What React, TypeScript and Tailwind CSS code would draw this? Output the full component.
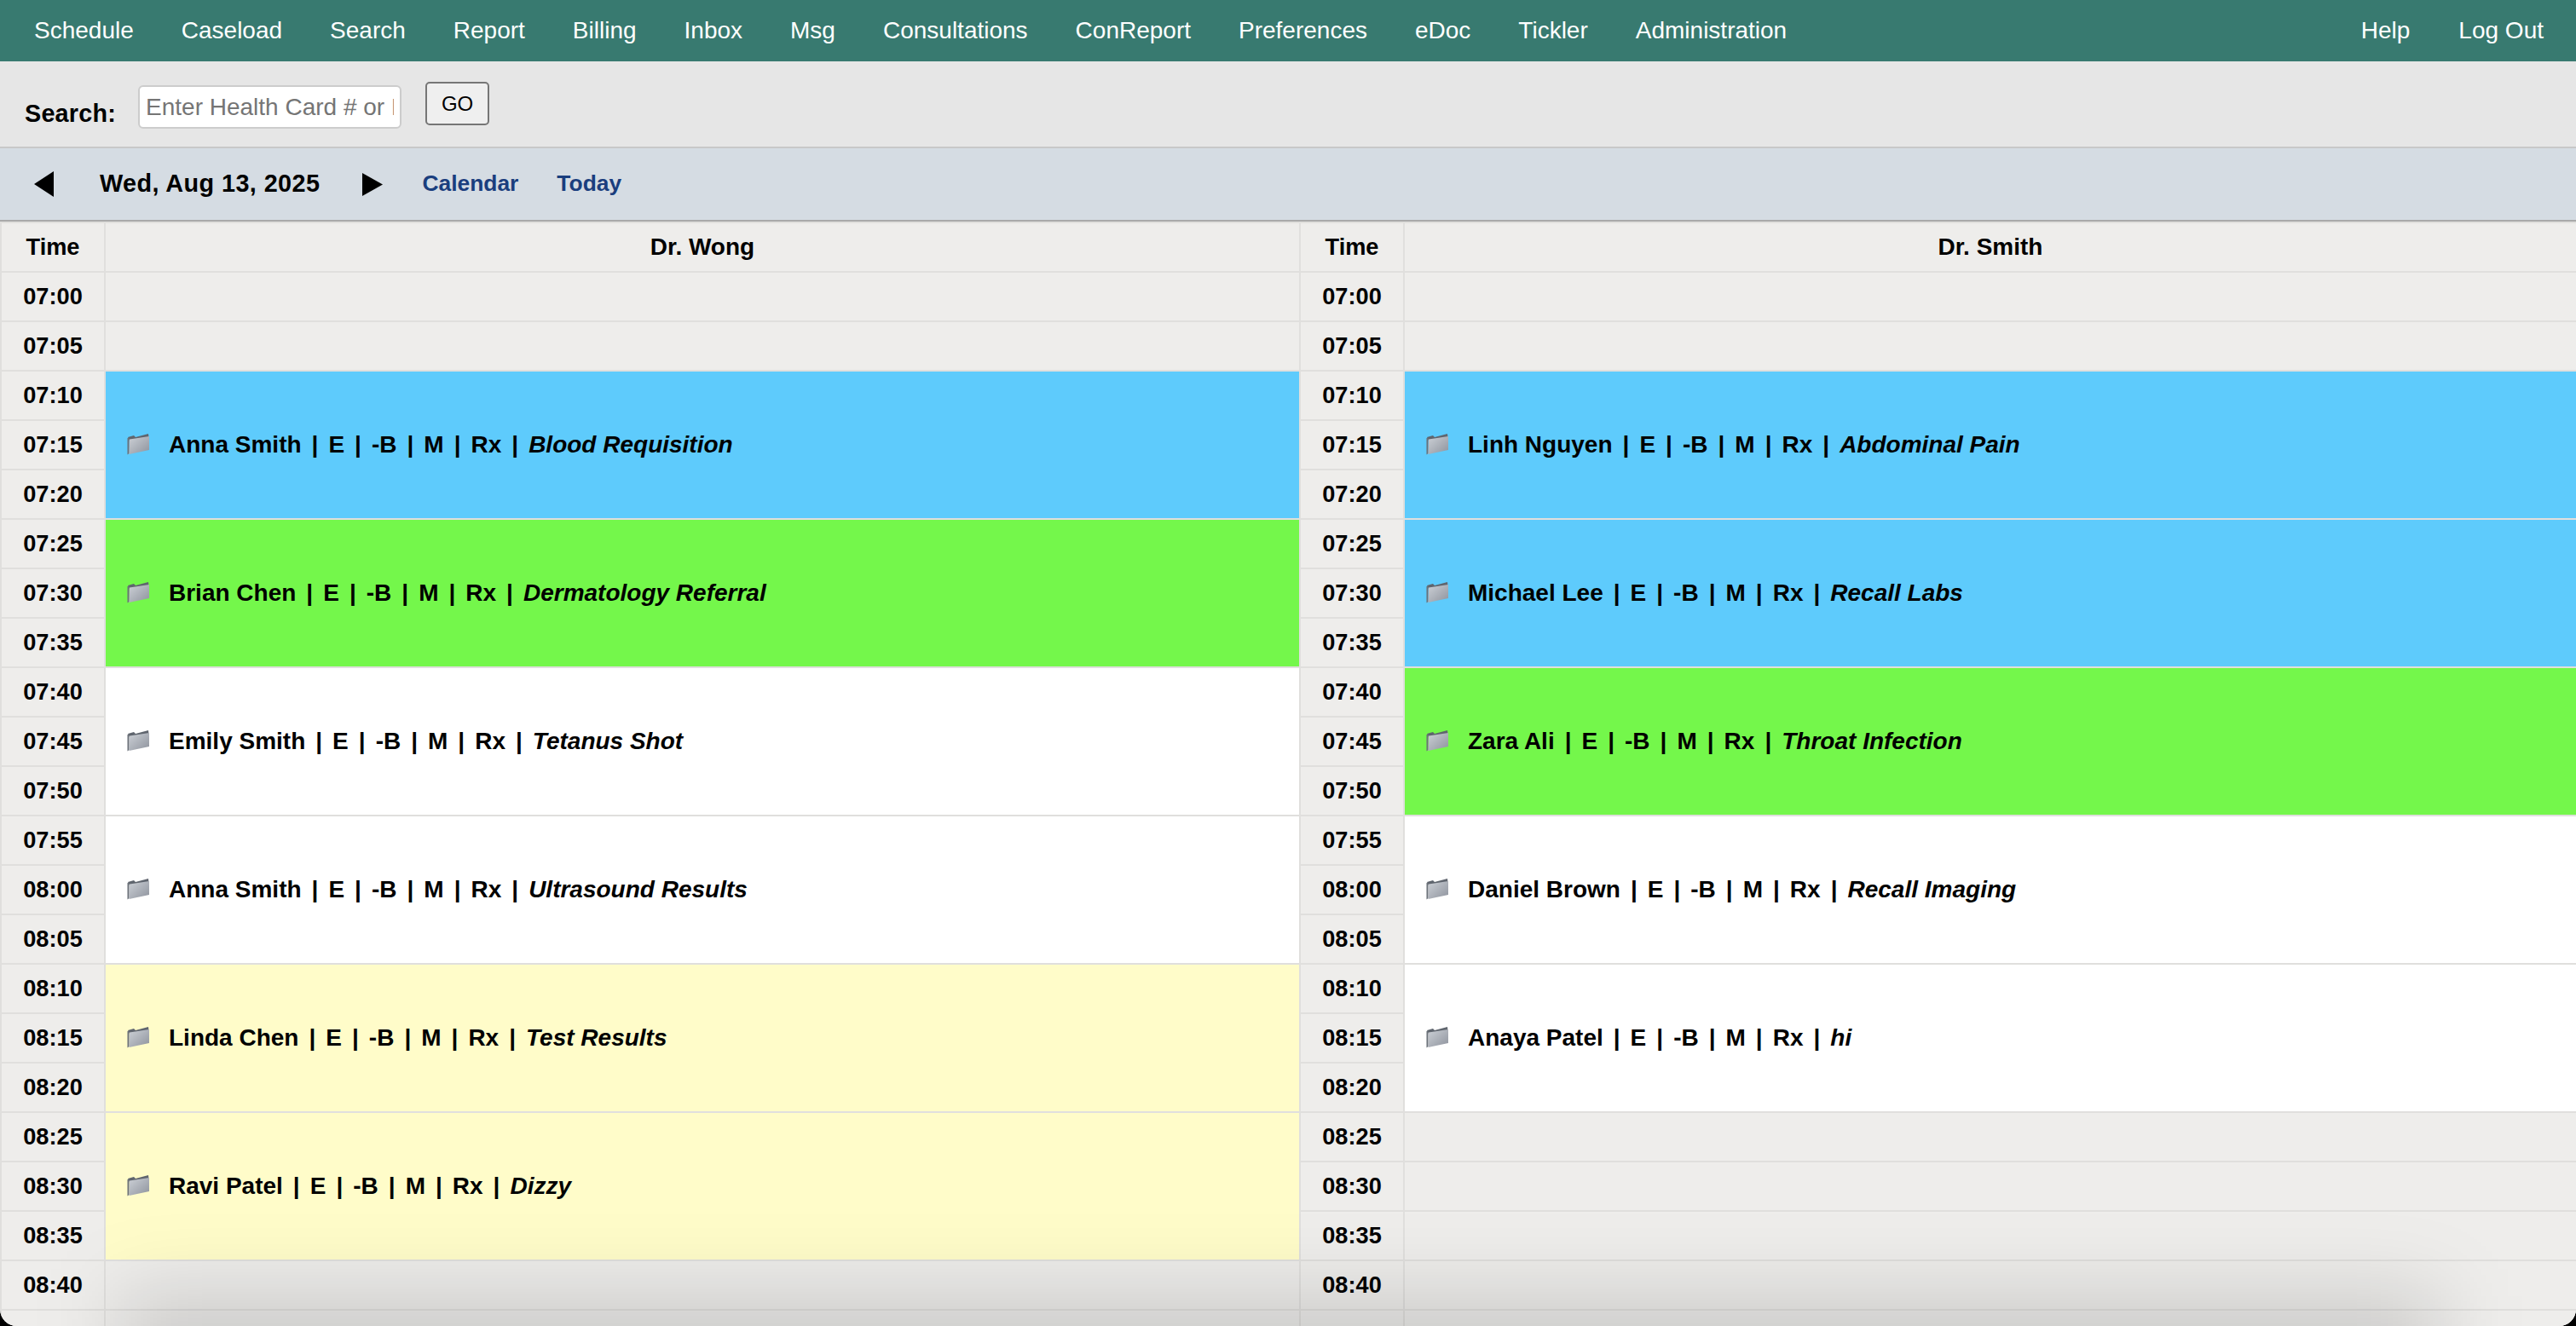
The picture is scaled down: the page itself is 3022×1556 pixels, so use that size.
import React from 'react';

const navLeft = ['Schedule', 'Caseload', 'Search', 'Report', 'Billing', 'Inbox', 'Msg', 'Consultations', 'ConReport', 'Preferences', 'eDoc', 'Tickler', 'Administration'];
const navRight = ['Help', 'Log Out'];

const times = ['07:00', '07:05', '07:10', '07:15', '07:20', '07:25', '07:30', '07:35', '07:40', '07:45', '07:50', '07:55', '08:00', '08:05', '08:10', '08:15', '08:20', '08:25', '08:30', '08:35', '08:40', '08:45'];

type Appt = { start: number; name: string; reason: string; bg: string };

const BLUE = 'bg-[#5ecbfc]';
const GREEN = 'bg-[#74f74b]';
const WHITE = 'bg-white';
const YELLOW = 'bg-[#fffcc9]';

const wong: Appt[] = [
  { start: 2, name: 'Anna Smith', reason: 'Blood Requisition', bg: BLUE },
  { start: 5, name: 'Brian Chen', reason: 'Dermatology Referral', bg: GREEN },
  { start: 8, name: 'Emily Smith', reason: 'Tetanus Shot', bg: WHITE },
  { start: 11, name: 'Anna Smith', reason: 'Ultrasound Results', bg: WHITE },
  { start: 14, name: 'Linda Chen', reason: 'Test Results', bg: YELLOW },
  { start: 17, name: 'Ravi Patel', reason: 'Dizzy', bg: YELLOW },
];

const smith: Appt[] = [
  { start: 2, name: 'Linh Nguyen', reason: 'Abdominal Pain', bg: BLUE },
  { start: 5, name: 'Michael Lee', reason: 'Recall Labs', bg: BLUE },
  { start: 8, name: 'Zara Ali', reason: 'Throat Infection', bg: GREEN },
  { start: 11, name: 'Daniel Brown', reason: 'Recall Imaging', bg: WHITE },
  { start: 14, name: 'Anaya Patel', reason: 'hi', bg: WHITE },
];

function FolderIcon({ id }: { id: string }) {
  return (
    <svg width="27" height="26" viewBox="0 0 27 26" className="shrink-0 -mt-[2px]">
      <defs>
        <linearGradient id={id} x1="0" y1="0" x2="1" y2="1">
          <stop offset="0" stopColor="#ccd0d6" />
          <stop offset="1" stopColor="#8e939d" />
        </linearGradient>
      </defs>
      <path d="M1 5 L8 3 L10 5 L25 1 L25.5 5 L3 9 Z" fill="#5f656e" />
      <path d="M0.5 6 L2.5 6 L2.5 24 L0.5 25.5 Z" fill="#6b7179" />
      <path d="M3 7.5 L26 4 L26 20 L2.5 25 Z" fill={`url(#${id})`} />
    </svg>
  );
}

function Sep() {
  return <span className="mx-[12px]">|</span>;
}

function ApptCell({ appt, col, id }: { appt: Appt; col: string; id: string }) {
  return (
    <div className={`${col} row-span-3 ${appt.bg} flex items-center pl-[25px] gap-[22px] font-bold text-[28px] text-black whitespace-nowrap`}>
      <FolderIcon id={id} />
      <div>
        {appt.name}
        <Sep />E<Sep />-B<Sep />M<Sep />Rx<Sep />
        <i>{appt.reason}</i>
      </div>
    </div>
  );
}

function TimeCell({ time, col }: { time: string; col: string }) {
  return <div className={`${col} bg-[#eeedeb] flex items-center justify-center font-bold text-[27.2px] text-black`}>{time}</div>;
}

function ColumnCell({ appts, index, col, id }: { appts: Appt[]; index: number; col: string; id: string }) {
  const appt = appts.find((a) => a.start === index);
  if (appt) return <ApptCell appt={appt} col={col} id={`${id}-${index}`} />;
  const covered = appts.some((a) => index > a.start && index < a.start + 3);
  if (covered) return null;
  return <div className={`${col} bg-[#eeedeb]`} />;
}

export default function App() {
  return (
    <div className="bg-black h-[1556px] w-[3022px]">
      <div className="relative h-full overflow-hidden rounded-b-[20px] bg-[#eeedeb] font-['Liberation_Sans',Arial,sans-serif]">
        {/* Top nav */}
        <nav className="h-[72px] bg-[#387a70] flex items-center justify-between pl-[40px] pr-[38px] text-white text-[28px]">
          <div className="flex gap-[56px]">
            {navLeft.map((item) => (
              <a key={item}>{item}</a>
            ))}
          </div>
          <div className="flex gap-[57px]">
            {navRight.map((item) => (
              <a key={item}>{item}</a>
            ))}
          </div>
        </nav>

        {/* Search */}
        <div className="h-[102px] bg-[#e6e6e6] border-b-2 border-[#c8c8c8] flex items-start pl-[29px]">
          <label className="mt-[44px] mr-[26px] font-bold text-[28.8px] tracking-[0.2px] leading-[34px] text-black">Search:</label>
          <input
            readOnly
            placeholder="Enter Health Card # or Name"
            className="mt-[28px] w-[309px] h-[51px] bg-white border-2 border-[#cccccc] rounded-[6px] px-[7px] text-[28px] placeholder:text-[#757575] outline-none"
          />
          <button className="mt-[24px] ml-[28px] w-[75px] h-[51px] bg-[#efefef] border-2 border-[#767676] rounded-[5px] text-[24px] text-black">GO</button>
        </div>

        {/* Date bar */}
        <div className="h-[86px] bg-[#d5dce3] border-b-2 border-[#a9a9a9] flex items-center pl-[40px]">
          <svg width="23" height="30" viewBox="0 0 23 30" className="shrink-0">
            <polygon points="23,0 23,30 0,15" fill="#000" />
          </svg>
          <span className="ml-[54px] font-bold text-[28.8px] tracking-[0.42px] text-black">Wed, Aug 13, 2025</span>
          <svg width="24" height="27" viewBox="0 0 24 27" className="ml-[50px] shrink-0">
            <polygon points="0,0 24,13.5 0,27" fill="#000" />
          </svg>
          <a className="ml-[46px] font-bold text-[26.4px] text-[#1a3e7e]">Calendar</a>
          <a className="ml-[45px] font-bold text-[26.4px] text-[#1a3e7e]">Today</a>
        </div>

        {/* Schedule grid */}
        <div className="grid grid-cols-[120px_1400px_120px_1fr] auto-rows-[56px] gap-[2px] bg-[#e0dfdd] p-[2px] pr-0">
          <div className="col-start-1 bg-[#eeedeb] flex items-center justify-center font-bold text-[27.2px] text-black">Time</div>
          <div className="col-start-2 bg-[#eeedeb] flex items-center justify-center font-bold text-[28px] text-black">Dr. Wong</div>
          <div className="col-start-3 bg-[#eeedeb] flex items-center justify-center font-bold text-[27.2px] text-black">Time</div>
          <div className="col-start-4 bg-[#eeedeb] flex items-center justify-center font-bold text-[28px] text-black">Dr. Smith</div>
          {times.map((time, i) => (
            <React.Fragment key={time}>
              <TimeCell time={time} col="col-start-1" />
              <ColumnCell appts={wong} index={i} col="col-start-2" id="w" />
              <TimeCell time={time} col="col-start-3" />
              <ColumnCell appts={smith} index={i} col="col-start-4" id="s" />
            </React.Fragment>
          ))}
        </div>

        {/* Window shadow along the bottom edge */}
        <div className="absolute left-[140px] right-[160px] bottom-[-85px] h-[120px] bg-black/15 blur-[48px] pointer-events-none" />
      </div>
    </div>
  );
}
